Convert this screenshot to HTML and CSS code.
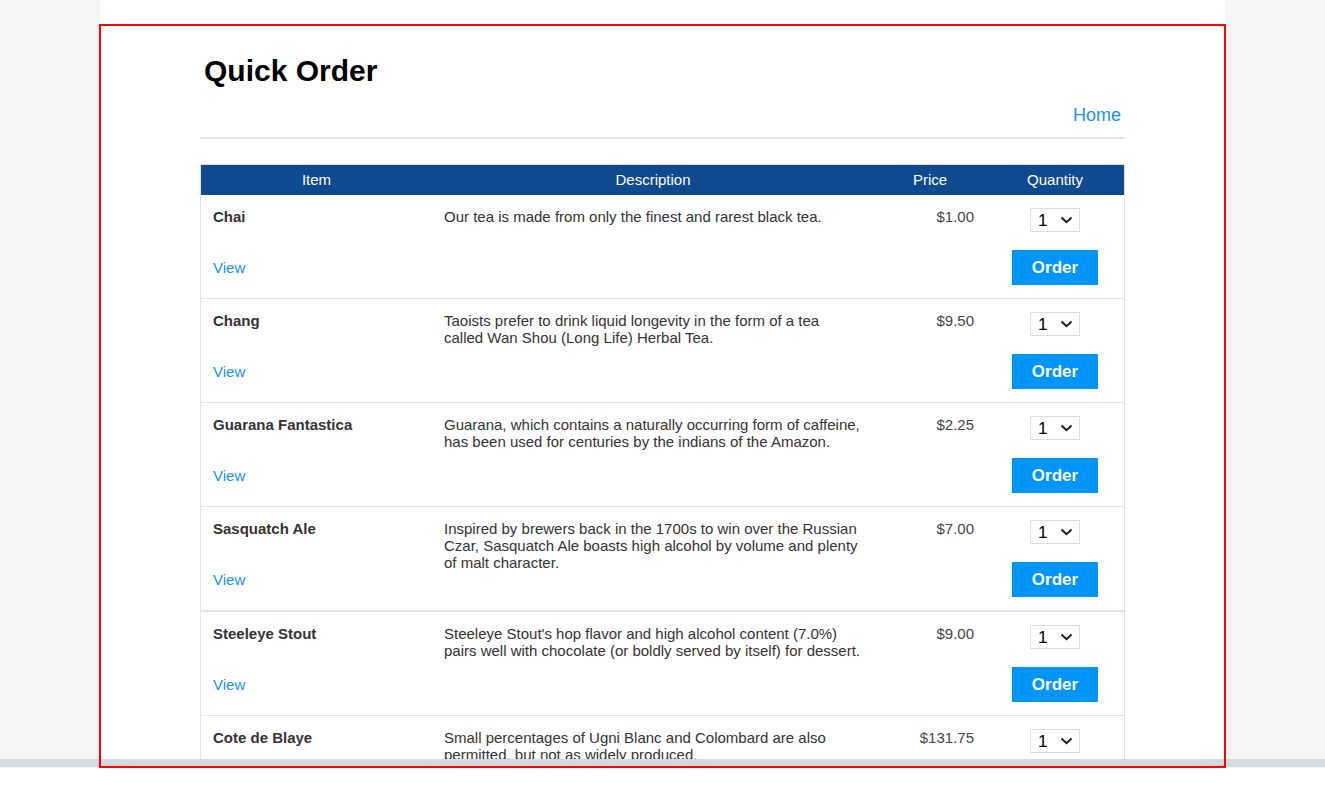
FILE: index.html
```html
<!DOCTYPE html>
<html lang="en">
<head>
<meta charset="utf-8">
<title>Quick Order</title>
<link rel="stylesheet" href="styles.css">
</head>
<body>
<div class="stage">
  <div class="column">
    <div class="frame">
      <div class="content">
        <h1 class="title">Quick Order</h1>
        <nav class="nav"><a class="nav-link" href="#">Home</a></nav>
        <div class="rule"></div>
        <div class="table">
          <div class="thead">
            <div class="th">Item</div>
            <div class="th">Description</div>
            <div class="th">Price</div>
            <div class="th">Quantity</div>
          </div>

          <div class="row">
            <div class="name">Chai</div>
            <a class="view" href="#">View</a>
            <div class="desc">Our tea is made from only the finest and rarest black tea.</div>
            <div class="price">$1.00</div>
            <div class="qty"><div class="select"><span>1</span><svg class="chev" width="13" height="8" viewBox="0 0 13 8"><path d="M1.5 1.5 6.5 6.3l5-4.8" fill="none" stroke="#1a1a1a" stroke-width="1.9"/></svg></div></div>
            <div class="act"><button class="btn">Order</button></div>
          </div>

          <div class="row">
            <div class="name">Chang</div>
            <a class="view" href="#">View</a>
            <div class="desc">Taoists prefer to drink liquid longevity in the form of a tea called Wan Shou (Long Life) Herbal Tea.</div>
            <div class="price">$9.50</div>
            <div class="qty"><div class="select"><span>1</span><svg class="chev" width="13" height="8" viewBox="0 0 13 8"><path d="M1.5 1.5 6.5 6.3l5-4.8" fill="none" stroke="#1a1a1a" stroke-width="1.9"/></svg></div></div>
            <div class="act"><button class="btn">Order</button></div>
          </div>

          <div class="row">
            <div class="name">Guarana Fantastica</div>
            <a class="view" href="#">View</a>
            <div class="desc">Guarana, which contains a naturally occurring form of caffeine, has been used for centuries by the indians of the Amazon.</div>
            <div class="price">$2.25</div>
            <div class="qty"><div class="select"><span>1</span><svg class="chev" width="13" height="8" viewBox="0 0 13 8"><path d="M1.5 1.5 6.5 6.3l5-4.8" fill="none" stroke="#1a1a1a" stroke-width="1.9"/></svg></div></div>
            <div class="act"><button class="btn">Order</button></div>
          </div>

          <div class="row row-thick">
            <div class="name">Sasquatch Ale</div>
            <a class="view" href="#">View</a>
            <div class="desc">Inspired by brewers back in the 1700s to win over the Russian Czar, Sasquatch Ale boasts high alcohol by volume and plenty of malt character.</div>
            <div class="price">$7.00</div>
            <div class="qty"><div class="select"><span>1</span><svg class="chev" width="13" height="8" viewBox="0 0 13 8"><path d="M1.5 1.5 6.5 6.3l5-4.8" fill="none" stroke="#1a1a1a" stroke-width="1.9"/></svg></div></div>
            <div class="act"><button class="btn">Order</button></div>
          </div>

          <div class="row">
            <div class="name">Steeleye Stout</div>
            <a class="view" href="#">View</a>
            <div class="desc">Steeleye Stout's hop flavor and high alcohol content (7.0%) pairs well with chocolate (or boldly served by itself) for dessert.</div>
            <div class="price">$9.00</div>
            <div class="qty"><div class="select"><span>1</span><svg class="chev" width="13" height="8" viewBox="0 0 13 8"><path d="M1.5 1.5 6.5 6.3l5-4.8" fill="none" stroke="#1a1a1a" stroke-width="1.9"/></svg></div></div>
            <div class="act"><button class="btn">Order</button></div>
          </div>

          <div class="row">
            <div class="name">Cote de Blaye</div>
            <a class="view" href="#">View</a>
            <div class="desc">Small percentages of Ugni Blanc and Colombard are also permitted, but not as widely produced.</div>
            <div class="price">$131.75</div>
            <div class="qty"><div class="select"><span>1</span><svg class="chev" width="13" height="8" viewBox="0 0 13 8"><path d="M1.5 1.5 6.5 6.3l5-4.8" fill="none" stroke="#1a1a1a" stroke-width="1.9"/></svg></div></div>
            <div class="act"><button class="btn">Order</button></div>
          </div>
        </div>
      </div>
    </div>
  </div>
  <div class="hbar"></div>
</div>
</body>
</html>
```

FILE: styles.css
```css
* { box-sizing: border-box; }

html, body {
  margin: 0;
  padding: 0;
  background: #ffffff;
  font-family: "Liberation Sans", Arial, sans-serif;
  color: #333333;
}

.stage {
  position: relative;
  height: 768px;
  background: #f5f5f5;
  overflow: hidden;
}

.column {
  width: 1125px;
  height: 100%;
  margin-left: 100px;
  background: #ffffff;
  padding-top: 24px;
}

.frame {
  position: relative;
  margin-left: -1px;
  width: 1127px;
  height: 744px;
  overflow: hidden;
  padding: 30px 0 0 101px;
}

.frame::after {
  content: "";
  position: absolute;
  inset: 0;
  border: 2px solid #ff0000;
  z-index: 3;
  pointer-events: none;
}

.hbar {
  position: absolute;
  left: 0;
  right: 0;
  top: 759px;
  height: 8px;
  background: #d5dae2;
  z-index: 2;
}

.content {
  width: 925px;
}

.title {
  margin: 0;
  padding-left: 4px;
  font-size: 30px;
  line-height: 34px;
  font-weight: bold;
  color: #000000;
}

.nav {
  margin-top: 17px;
  text-align: right;
  padding-right: 4px;
  font-size: 18px;
  line-height: 21px;
}

.nav-link {
  color: #1e8ff5;
  text-decoration: none;
}

.rule {
  margin-top: 11px;
  height: 2px;
  background: #e5e5e5;
}

.table {
  margin-top: 25px;
  border: 1px solid #e3e3e3;
  border-bottom: none;
}

.thead {
  display: grid;
  grid-template-columns: 231px 442px 112px 138px;
  background: #0f4a8f;
  color: #ffffff;
  font-size: 15px;
  line-height: 29px;
  height: 30px;
}

.th {
  text-align: center;
}

.row {
  display: grid;
  grid-template-columns: 231px 442px 112px 138px;
  grid-template-rows: 24px 35px;
  row-gap: 18px;
  padding: 13px 0;
  border-bottom: 1px solid #e3e3e3;
  font-size: 15px;
  line-height: 17px;
}

.row-thick {
  border-bottom-width: 2px;
}

.name {
  grid-column: 1;
  grid-row: 1;
  padding-left: 12px;
  font-weight: bold;
  color: #333333;
}

.view {
  grid-column: 1;
  grid-row: 2;
  align-self: center;
  justify-self: start;
  margin-left: 12px;
  color: #1e8ff5;
  text-decoration: none;
}

.desc {
  grid-column: 2;
  grid-row: 1 / span 2;
  padding: 0 12px;
  color: #333333;
}

.price {
  grid-column: 3;
  grid-row: 1;
  padding-right: 12px;
  text-align: right;
  color: #444444;
}

.qty {
  grid-column: 4;
  grid-row: 1;
  display: flex;
  justify-content: center;
}

.select {
  width: 50px;
  height: 24px;
  border: 1px solid #dedede;
  background: #ffffff;
  display: flex;
  align-items: center;
  justify-content: space-between;
  padding: 0 6px 0 7px;
  font-size: 17px;
  color: #000000;
}

.chev {
  display: block;
}

.act {
  grid-column: 4;
  grid-row: 2;
  display: flex;
  justify-content: center;
}

.btn {
  width: 86px;
  height: 35px;
  border: none;
  margin: 0;
  padding: 0;
  background: #0095fa;
  color: #ffffff;
  font-family: "Liberation Sans", Arial, sans-serif;
  font-size: 17px;
  font-weight: bold;
}
```
